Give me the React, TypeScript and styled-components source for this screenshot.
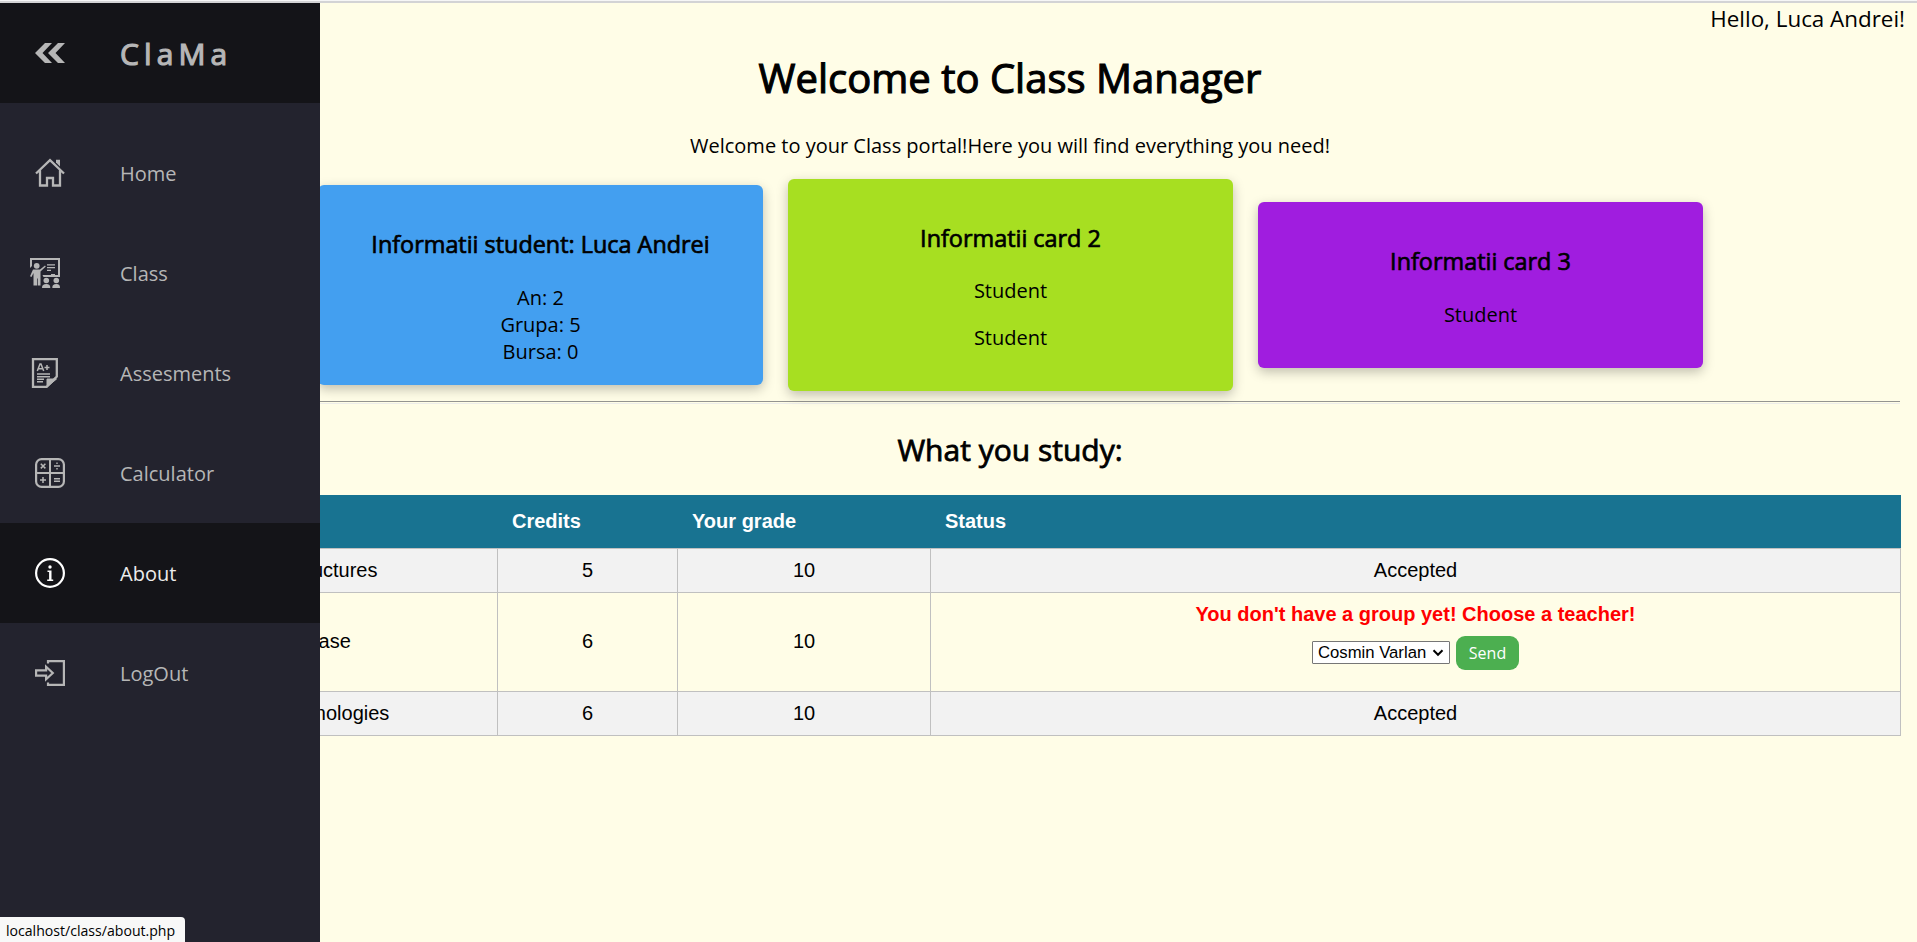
import React from "react";
import styled, { createGlobalStyle } from "styled-components";

const Global = createGlobalStyle`
  * { box-sizing: border-box; }
  body { margin: 0; background: #fffde7; color: #000; font-family: "Open Sans", sans-serif; font-size: 20px; overflow: hidden; }
`;

const Page = styled.div`
  height: 942px;
  border-top: 1px solid #f6f6f6;
`;

const TopEdge = styled.div`
  height: 2px;
  background: #d3d3d5;
`;

const Sidebar = styled.nav`
  position: fixed;
  top: 3px;
  bottom: 0;
  left: 0;
  width: 320px;
  background: #23232e;
  color: #b6b6b6;
`;

const Brand = styled.div`
  display: flex;
  align-items: center;
  height: 100px;
  margin-bottom: 20px;
  padding-left: 35px;
  background: #141418;
  font-size: 30px;
  letter-spacing: 5.1px;
`;

const BrandName = styled.span`
  margin-left: 55px;
  -webkit-text-stroke: 1.2px currentColor;
`;

const NavItem = styled.a<{ $active?: boolean }>`
  display: flex;
  align-items: center;
  height: 100px;
  background: ${(p) => (p.$active ? "#141418" : "transparent")};
  color: ${(p) => (p.$active ? "#ececec" : "#b6b6b6")};
`;

const IconSlot = styled.span<{ $left?: number }>`
  display: flex;
  width: 120px;
  padding-left: ${(p) => p.$left ?? 35}px;
`;

const Main = styled.main`
  padding: 0 17px 0 120px;
`;

const Greeting = styled.div`
  height: 30px;
  margin-right: -5px;
  text-align: right;
  font-size: 22.4px;
  line-height: 31px;
`;

const Title = styled.h1`
  margin: 18px 0 0;
  font-size: 40px;
  font-weight: 400;
  line-height: 54px;
  text-align: center;
  -webkit-text-stroke: 1.1px currentColor;
`;

const Lead = styled.p`
  margin: 27px 0 20px;
  line-height: 27px;
  text-align: center;
`;

const Cards = styled.section`
  display: flex;
  align-items: center;
  gap: 25px;
  height: 212px;
  padding-left: 198px;
`;

const Card = styled.article<{ $color: string; $height: number }>`
  flex: none;
  width: 445px;
  height: ${(p) => p.$height}px;
  padding-top: 42px;
  border-radius: 6px;
  background: ${(p) => p.$color};
  box-shadow: 0 4px 12px rgba(0, 0, 0, 0.25);
  text-align: center;
  line-height: 27px;
`;

const CardTitle = styled.h3<{ $gap: number }>`
  margin: 0 0 ${(p) => p.$gap}px;
  font-size: 23.4px;
  font-weight: 400;
  line-height: 34px;
  -webkit-text-stroke: 0.7px currentColor;
`;

const CardText = styled.p`
  margin: 0 0 20px;
`;

const Divider = styled.hr`
  height: 3px;
  margin: 10px 0 0;
  border: 0;
  border-top: 1px solid #949490;
  border-bottom: 1px solid #ededea;
`;

const Subtitle = styled.h2`
  margin: 25px 0 25px;
  font-size: 30px;
  font-weight: 400;
  line-height: 41px;
  text-align: center;
  -webkit-text-stroke: 0.8px currentColor;
`;

const Table = styled.table`
  width: 1781px;
  table-layout: fixed;
  border-collapse: collapse;
  font-family: "Liberation Sans", Arial, sans-serif;
  text-align: center;
`;

const Th = styled.th<{ $width?: number }>`
  width: ${(p) => (p.$width ? `${p.$width}px` : "auto")};
  height: 53px;
  padding: 0 14.5px;
  background: #187391;
  color: #fff;
  text-align: left;
`;

const Row = styled.tr<{ $height: number; $shaded?: boolean }>`
  height: ${(p) => p.$height}px;
  background: ${(p) => (p.$shaded ? "#f2f2f2" : "transparent")};
`;

const Td = styled.td`
  padding: 0;
  border: 1px solid #c0c0c0;

  &:first-child {
    padding-right: 2px;
  }
`;

const Warning = styled.div`
  margin-bottom: 10px;
  color: #f00;
  font-weight: 700;
  line-height: 23px;
`;

const Picker = styled.form`
  display: flex;
  align-items: center;
  justify-content: center;
  gap: 6px;
  margin-bottom: 11px;
`;

const SelectBox = styled.span`
  position: relative;
  display: flex;

  svg {
    position: absolute;
    top: 8px;
    right: 6px;
    pointer-events: none;
  }
`;

const Select = styled.select`
  appearance: none;
  width: 138px;
  height: 23px;
  padding: 0 18px 0 5px;
  border: 1px solid #767676;
  border-radius: 1px;
  background: #fff;
  color: #000;
  font: 16.7px "Liberation Sans", Arial, sans-serif;
`;

const Send = styled.button`
  width: 63px;
  height: 34px;
  border: 0;
  border-radius: 9px;
  background: #4caf50;
  color: #fff;
  font: 16px "Open Sans", sans-serif;
  padding: 0;
`;

const LinkPreview = styled.div`
  position: fixed;
  left: 0;
  bottom: 0;
  width: 185px;
  height: 25px;
  padding-left: 6px;
  border-top-right-radius: 4px;
  background: #f8f8f8;
  font: 14.1px/27px "Open Sans", sans-serif;
  white-space: nowrap;
`;

const CollapseIcon = () => (
  <svg width="30" height="30" viewBox="0 0 30 30" fill="currentColor">
    <path d="M10 5h7l-9.500 10L17 25h-7L0 15zM23 5h7l-9.500 10L30 25h-7L13 15z" />
  </svg>
);

const HomeIcon = () => (
  <svg width="30" height="30" viewBox="0 0 30 30" fill="none" stroke="currentColor" strokeWidth="2.300">
    <path d="M1 15.500 15 2.200l14 13.300M5 12.500V27.500h7v-7.500h6v7.500h7V12.500" />
    <path d="M21 1.800h4v6.700l-4-4z" fill="currentColor" stroke="none" />
  </svg>
);

const ClassIcon = () => (
  <svg width="30" height="30" viewBox="0 0 30 30" fill="currentColor">
    <path d="M0 0h30v19H13.500l-1-2H21v-1h4v1h3V2H2v6L0 10z" />
    <circle cx="6.700" cy="7.800" r="2.900" />
    <path d="M3 11.500h7l5-4 .8 1-5.300 5V27.500H7.800v-7h-.7v7H3.500V15L1.500 19 0 18.300z" />
    <path d="M17 6.300h8v1.200h-8zM17 9h8v1.200h-8zM17 11.700h4v1.200h-4z" />
    <circle cx="16.300" cy="22.500" r="2.800" />
    <circle cx="26.300" cy="22.500" r="2.800" />
    <path d="M12 30c0-3 1.500-4 4.300-4s4 1 4 4zM22.300 30c0-3 1.200-4 4-4s3.700 1 3.700 4z" />
  </svg>
);

const GradeIcon = () => (
  <svg width="30" height="30" viewBox="0 0 30 30" fill="none" stroke="currentColor">
    <path d="M3 1h23.800v17.500L16.500 29H3z" strokeWidth="2.300" />
    <path d="M17 29v-8h9.500z" fill="currentColor" />
    <path d="M7.300 13l2.700-7h1l2.700 7M8.300 10.700h4.400M14.500 9.500h5M17 7v5" strokeWidth="1.500" />
    <path d="M7 16h13M7 18.800h13M7 21.300h7M7 23.800h6" strokeWidth="1.400" />
  </svg>
);

const CalculatorIcon = () => (
  <svg width="30" height="30" viewBox="0 0 30 30" fill="none" stroke="currentColor">
    <rect x="1.100" y="1.100" width="27.800" height="27.800" rx="5.500" strokeWidth="2.200" />
    <path d="M15 1v28M1 15h28" strokeWidth="2" />
    <path d="m5.800 5.800 4.600 4.600m0-4.600-4.600 4.600M5 22h6m-3-3v6M19 8h6M19 20.700h6M19 23.300h6" strokeWidth="1.500" />
    <path d="M21.300 5.300h1.400M21.300 10.700h1.400" strokeWidth="1.400" />
  </svg>
);

const AboutIcon = () => (
  <svg width="30" height="30" viewBox="0 0 30 30" fill="#fff">
    <circle cx="15" cy="15" r="13.900" fill="none" stroke="#fff" strokeWidth="2.200" />
    <circle cx="15" cy="9" r="1.700" />
    <path d="M12.500 12.500h4v9h1.700V23h-6v-1.500h1.900V14h-1.600z" />
  </svg>
);

const LogoutIcon = () => (
  <svg width="30" height="30" viewBox="0 0 30 30" fill="none" stroke="currentColor" strokeWidth="2.200">
    <path d="M13 5.500V3.200h15.900v23.600H13v-2.300" />
    <path d="M1.100 12.300h10V8.700l6.700 6.300-6.700 6.300v-3.600h-10z" />
  </svg>
);

const SelectArrow = () => (
  <svg width="12" height="8" viewBox="0 0 12 8" fill="none" stroke="#000" strokeWidth="2">
    <path d="m1.500 1.300 4.500 4.500 4.500-4.500" />
  </svg>
);

const navItems = [
  { label: "Home", icon: <HomeIcon /> },
  { label: "Class", icon: <ClassIcon />, left: 30 },
  { label: "Assesments", icon: <GradeIcon />, left: 30 },
  { label: "Calculator", icon: <CalculatorIcon /> },
  { label: "About", icon: <AboutIcon />, active: true },
  { label: "LogOut", icon: <LogoutIcon /> },
];

export default function App() {
  return (
    <Page>
      <Global />
      <TopEdge />
      <Main>
        <Greeting>Hello, Luca Andrei!</Greeting>
        <Title>Welcome to Class Manager</Title>
        <Lead>Welcome to your Class portal!Here you will find everything you need!</Lead>
        <Cards>
          <Card $color="#439ff0" $height={200}>
            <CardTitle $gap={23}>Informatii student: Luca Andrei</CardTitle>
            <CardText>An: 2<br />Grupa: 5<br />Bursa: 0</CardText>
          </Card>
          <Card $color="#a7df21" $height={212}>
            <CardTitle $gap={22}>Informatii card 2</CardTitle>
            <CardText>Student</CardText>
            <CardText>Student</CardText>
          </Card>
          <Card $color="#a01ddf" $height={166}>
            <CardTitle $gap={23}>Informatii card 3</CardTitle>
            <CardText>Student</CardText>
          </Card>
        </Cards>
        <Divider />
        <Subtitle>What you study:</Subtitle>
        <Table>
          <thead>
            <tr>
              <Th $width={377}>Course</Th>
              <Th $width={180}>Credits</Th>
              <Th $width={253}>Your grade</Th>
              <Th>Status</Th>
            </tr>
          </thead>
          <tbody>
            <Row $height={44} $shaded>
              <Td>Data Structures</Td><Td>5</Td><Td>10</Td><Td>Accepted</Td>
            </Row>
            <Row $height={99}>
              <Td>Database</Td><Td>6</Td><Td>10</Td>
              <Td>
                <Warning>You don't have a group yet! Choose a teacher!</Warning>
                <Picker>
                  <SelectBox>
                    <Select><option>Cosmin Varlan</option></Select>
                    <SelectArrow />
                  </SelectBox>
                  <Send type="button">Send</Send>
                </Picker>
              </Td>
            </Row>
            <Row $height={44} $shaded>
              <Td>Web Technologies</Td><Td>6</Td><Td>10</Td><Td>Accepted</Td>
            </Row>
          </tbody>
        </Table>
      </Main>
      <Sidebar>
        <Brand>
          <CollapseIcon />
          <BrandName>ClaMa</BrandName>
        </Brand>
        {navItems.map((item) => (
          <NavItem key={item.label} $active={item.active}>
            <IconSlot $left={item.left}>{item.icon}</IconSlot>
            {item.label}
          </NavItem>
        ))}
      </Sidebar>
      <LinkPreview>localhost/class/about.php</LinkPreview>
    </Page>
  );
}
